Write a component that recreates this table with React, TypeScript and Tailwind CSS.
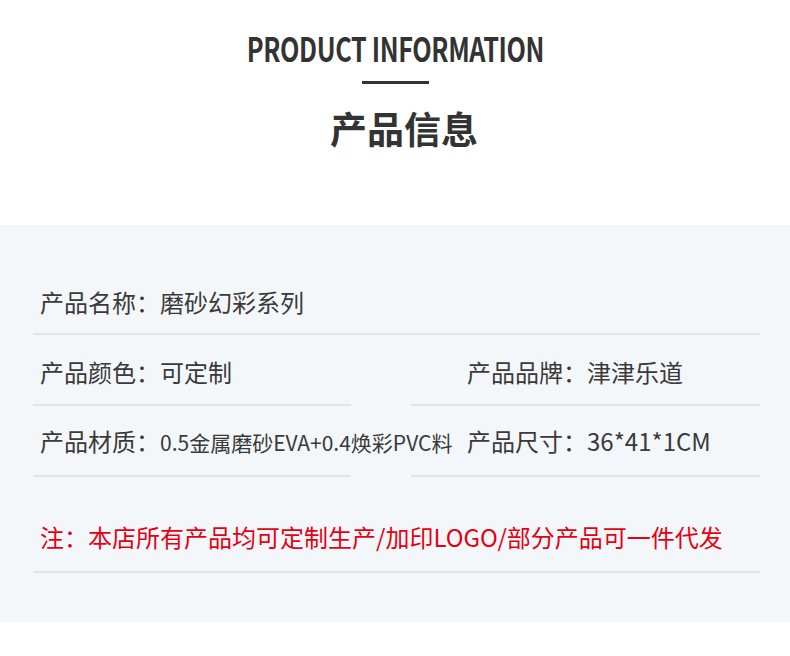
import React from 'react';

const font = { fontFamily: '"Noto Sans CJK SC", "Noto Sans", sans-serif' };

interface CellProps {
  label: string;
  value: string;
  valueClass?: string;
}

const Cell = ({ label, value, valueClass = '' }: CellProps) => (
  <span className="whitespace-nowrap">
    {label}：<span className={valueClass}>{value}</span>
  </span>
);

export default function App() {
  return (
    <div className="w-[790px] h-[656px] bg-white text-[#3a3a3a]" style={font}>
      {/* Heading */}
      <div className="h-[225px] flex flex-col items-center pt-[28px]">
        <div className="text-[33px] leading-[40px] font-bold text-[#333] scale-x-[0.765] whitespace-nowrap tracking-[-0.5px]">
          PRODUCT INFORMATION
        </div>
        <div className="mt-[13px] w-[67px] h-[3px] bg-[#333]"></div>
        <div className="mt-[20px] ml-[18px] text-[37px] leading-[48px] font-bold text-[#333]">
          产品信息
        </div>
      </div>

      {/* Info table */}
      <div className="bg-[#f4f7fa] pl-[33px] pr-[30px] pt-[65px] pb-[49px] text-[24px] leading-[24px]">
        <div className="border-b-2 border-[#e0e5ea] pl-[7px] pb-[19px]">
          <Cell label="产品名称" value="磨砂幻彩系列" />
        </div>

        <div className="flex gap-[60px]">
          <div className="w-[318px] border-b-2 border-[#e0e5ea] pl-[7px] pt-[25px] pb-[20px]">
            <Cell label="产品颜色" value="可定制" />
          </div>
          <div className="w-[349px] border-b-2 border-[#e0e5ea] pl-[56px] pt-[25px] pb-[20px]">
            <Cell label="产品品牌" value="津津乐道" />
          </div>
        </div>

        <div className="flex gap-[60px]">
          <div className="w-[318px] border-b-2 border-[#e0e5ea] pl-[7px] pt-[23px] pb-[21px]">
            <Cell label="产品材质" value="0.5金属磨砂EVA+0.4焕彩PVC料" valueClass="text-[21px]" />
          </div>
          <div className="w-[349px] border-b-2 border-[#e0e5ea] pl-[56px] pt-[23px] pb-[21px]">
            <Cell label="产品尺寸" value="36*41*1CM" />
          </div>
        </div>

        <div className="border-b-2 border-[#e0e5ea] pl-[7px] pt-[48px] pb-[22px] text-[#e60012]">
          注：本店所有产品均可定制生产/加印LOGO/部分产品可一件代发
        </div>
      </div>
    </div>
  );
}
